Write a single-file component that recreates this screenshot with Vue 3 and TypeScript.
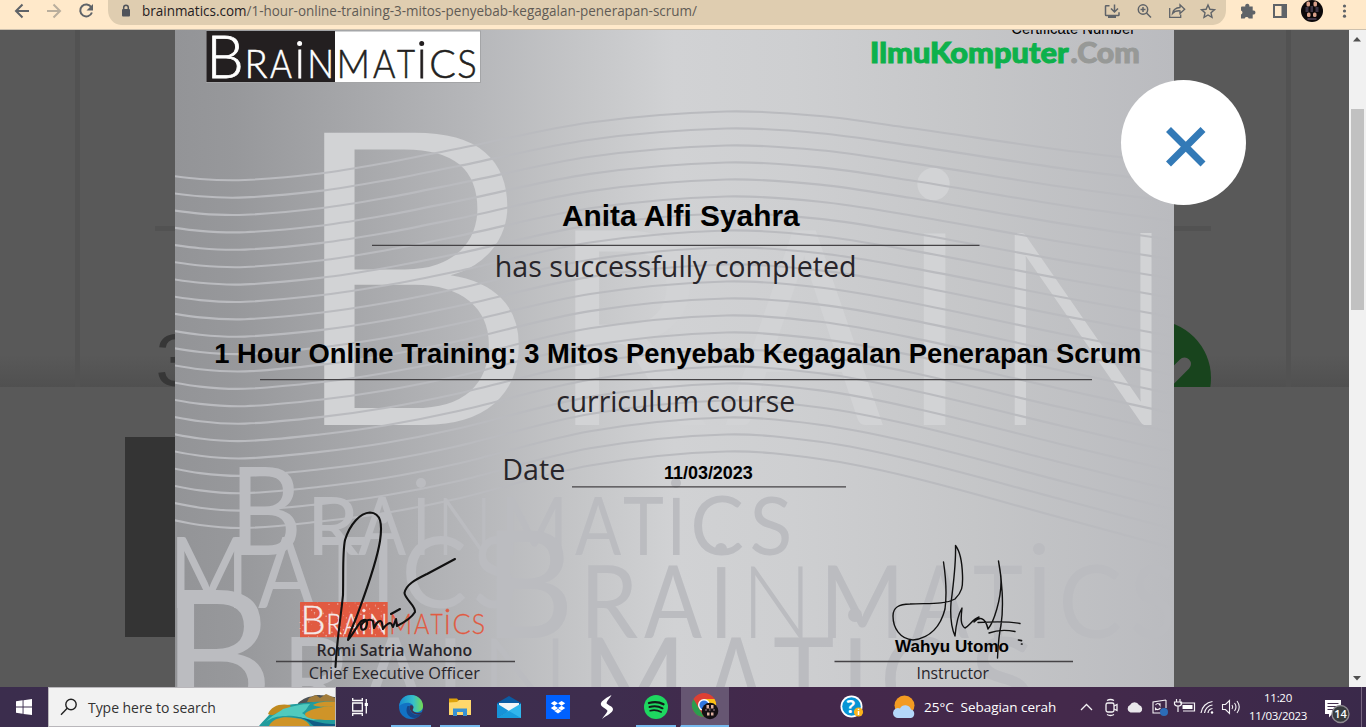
<script setup lang="ts">
interface Glyph {
  key: string
  ch: string
  family: string
  weight: number
  transform: string
}

const ctx = document.createElement('canvas').getContext('2d')!

/** Fits the ink of a text run between x0 and x1, its reference character rising from base to base - rise. */
function fit(ch: string, family: string, weight: number, x0: number, x1: number, base: number, rise: number): Glyph {
  ctx.font = `${weight} 1000px "${family}"`
  const ink = ctx.measureText(ch)
  const ref = ctx.measureText(ch === 'ı' ? 'ı' : 'H')
  const sx = ((x1 - x0) / (ink.actualBoundingBoxRight + ink.actualBoundingBoxLeft)) * 10
  const sy = (rise / ref.actualBoundingBoxAscent) * 10
  const tx = x0 + (ink.actualBoundingBoxLeft / 10) * sx
  return {
    key: `${ch}-${x0}-${base}`,
    ch,
    family,
    weight,
    transform: `matrix(${sx.toFixed(4)} 0 0 ${sy.toFixed(4)} ${tx.toFixed(2)} ${base})`,
  }
}

type Span = [string, number, number]
interface Dot { x: number; y: number; r: number }

function row(spans: Span[], base: number, rise: number, weight: number, capital?: number): Glyph[] {
  return spans.map(([ch, a, b]) => {
    const slim = ch === 'N' && weight > 300 ? 300 : weight
    return fit(ch, 'Lato', slim, a, b, base, ch === 'B' && capital ? capital : rise)
  })
}

const bigLead = row([['B', 325, 516]], 425, 195, 300, 297)
const bigRest = row([['R', 572, 707], ['A', 725, 886], ['ı', 920.7, 947], ['N', 1012, 1153]], 425, 195, 400)
const smallWords = [
  ...row([['B', 238, 298], ['R', 313, 359], ['A', 358, 407], ['ı', 417, 425], ['N', 443, 486], ['M', 506, 562], ['A', 575, 622], ['T', 623, 663], ['ı', 672, 680], ['C', 694, 743], ['S', 752, 789]], 555, 58, 400, 88),
  ...row([['M', 176, 242], ['A', 258, 316], ['T', 318, 366], ['ı', 378, 388], ['C', 406, 466], ['S', 476, 514]], 608, 71, 400),
  ...row([['B', 495, 569], ['R', 587, 638], ['A', 644, 703], ['ı', 716, 726], ['N', 750, 803], ['M', 827, 897], ['A', 912, 970], ['T', 973, 1022], ['ı', 1033, 1045], ['C', 1063, 1121], ['S', 1133, 1172]], 638, 72, 400, 108),
  ...row([['B', 175, 267], ['R', 290, 350], ['A', 358, 430], ['ı', 444, 456], ['N', 490, 559], ['M', 590, 677], ['A', 705, 768], ['T', 773, 833], ['ı', 849, 861], ['C', 885, 950], ['S', 973, 1030]], 721, 84, 400, 131),
]
const smallDots: Dot[] = [
  { x: 421, y: 483, r: 5 }, { x: 676, y: 483, r: 5 }, { x: 383, y: 518, r: 5.5 },
  { x: 721, y: 549, r: 6 }, { x: 1039, y: 549, r: 6 }, { x: 855, y: 615, r: 7 },
]

const logoBrain = row([['B', 212, 240.5], ['R', 248, 267], ['A', 270, 292], ['ı', 298.3, 301], ['N', 310.500, 330.500]], 77.5, 28, 300, 42)
const logoMatics = row([['M', 340, 366.5], ['A', 373, 395.5], ['T', 397, 415], ['ı', 420.3, 423], ['C', 431, 455], ['S', 458.5, 475]], 77.5, 28, 300)

const ilmu = fit('IlmuKomputer', 'Lato', 900, 872, 1068.5, 63, 20.5)
const dotCom = fit('.Com', 'Lato', 900, 1071.500, 1138.5, 63, 20.5)

const sans = 'Liberation Sans'
const soft = 'Open Sans'
const inkTexts = [
  fit('Certificate Number', sans, 400, 1012, 1135, 33.6, 11),
  fit('Anita Alfi Syahra', sans, 700, 562.5, 801, 226, 21),
  fit('1 Hour Online Training: 3 Mitos Penyebab Kegagalan Penerapan Scrum', sans, 700, 216, 1140, 363, 19.3),
  fit('11/03/2023', sans, 700, 665, 752.5, 478.5, 13.4),
  fit('Wahyu Utomo', sans, 700, 895, 1008.5, 652, 11.7),
]
const greyTexts = [
  fit('has successfully completed', soft, 400, 497, 854.5, 277, 20.5),
  fit('curriculum course', soft, 400, 557.5, 794, 411.7, 20.5),
  fit('Date', soft, 400, 505, 564, 480, 20.5),
  fit('Romi Satria Wahono', soft, 600, 318, 471.5, 656, 11.5),
  fit('Chief Executive Officer', soft, 400, 309.5, 480, 679.3, 11.8),
  fit('Instructor', soft, 400, 918, 989, 679.3, 11.8),
]

/* Guilloche lines: anchors of the first line, and the step to the next one. */
const anchors = [
  [150, 173, 17.1], [200, 179, 17.3], [245, 180, 17.4], [320, 173.5, 17.4], [385, 163, 17.5], [456, 149, 17.5],
  [590, 122.5, 17.15], [726, 111.5, 17], [820, 116, 17.15], [910, 128, 17.45], [1062, 150, 18.4], [1180, 164, 19.3],
]
const waves = Array.from({ length: 21 }, (_, i) => {
  const p = anchors.map(([x, y, s]) => [x, y + s * i])
  let d = `M${p[0][0]} ${p[0][1].toFixed(1)}`
  for (let k = 0; k < p.length - 1; k++) {
    const slope = (n: number) => {
      const a = p[Math.max(n - 1, 0)]
      const b = p[Math.min(n + 1, p.length - 1)]
      return (b[1] - a[1]) / (b[0] - a[0])
    }
    const h = (p[k + 1][0] - p[k][0]) / 3
    const c1 = p[k][1] + slope(k) * h
    const c2 = p[k + 1][1] - slope(k + 1) * h
    d += `C${p[k][0] + h} ${c1.toFixed(1)} ${p[k + 1][0] - h} ${c2.toFixed(1)} ${p[k + 1][0]} ${p[k + 1][1].toFixed(1)}`
  }
  return d
})

const specks = Array.from({ length: 110 }, (_, i) => ({
  x: 300 + ((i * 37.7) % 87),
  y: 602 + ((i * 13.31 + (i % 7) * 3.1) % 35),
  r: 0.3 + (i % 4) * 0.16,
}))

const host = 'brainmatics.com'
const path = '/1-hour-online-training-3-mitos-penyebab-kegagalan-penerapan-scrum/'
</script>

<template>
  <div class="screen">
    <header class="toolbar">
      <svg class="nav" viewBox="0 0 108 29">
        <g fill="none" stroke="#5f6368" stroke-width="2">
          <path d="M29 11H16.500M22.500 4.500 16 11l6.500 6.500" />
          <path d="M47 11h12.500M53.500 4.500 60 11l-6.500 6.500" stroke="#b9ae9d" />
          <path d="M91.300 7.200A6 6 0 1 0 91.900 12.500" />
        </g>
        <path d="M93 4v6.500h-6.500z" fill="#5f6368" />
      </svg>
      <div class="omnibox">
        <svg class="lock" width="12" height="14" viewBox="0 0 12 14"><path d="M3 5h6q1 0 1 1v5.500q0 1-1 1H3q-1 0-1-1V6q0-1 1-1z" fill="#50535a" /><path d="M3.700 5V3.500a2.300 2.300 0 0 1 4.600 0V5" fill="none" stroke="#50535a" stroke-width="1.500" /></svg>
        <svg class="url" width="560" height="24"><text x="0" y="16" textLength="555" lengthAdjust="spacingAndGlyphs"><tspan fill="#1f2022">{{ host }}</tspan><tspan>{{ path }}</tspan></text></svg>
        <svg class="actions" width="128" height="24" viewBox="0 0 128 24">
          <g fill="none" stroke="#5f6368" stroke-width="1.500">
            <path d="M7.500 5.700H4.200q-.7 0-.7.700v8.300q0 .800.700.800h12q.8 0 .8-.8v-2.500M12.500 4.500v7M9 8.500l3.500 3.500L16 8.500" />
            <path d="M6 17h8" stroke-width="2" />
            <circle cx="41" cy="9.500" r="4.700" /><path d="m44.500 13 4.500 4.500M38.500 9.500h5M41 7v5" />
            <path d="M67.700 8v9.300h11V14.500M70.500 13.500q1-5.500 7.500-6V4.800l4.700 4.500-4.700 4.200v-2.700q-5-.3-7.500 2.700z" stroke-width="1.300" />
            <path d="m106 5 1.900 4.300 4.600.4-3.500 3.100 1 4.600-4-2.400-4 2.400 1-4.600-3.500-3.100 4.600-.4z" stroke-width="1.400" />
          </g>
        </svg>
      </div>
      <svg class="tools" width="140" height="29" viewBox="0 0 140 29">
        <path d="M16 6.500h3.300a2.100 2.100 0 1 1 4 0h3.400v4a2.100 2.100 0 1 1 0 4v4h-4a2.100 2.100 0 0 0-4 0H15v-4a2.100 2.100 0 0 0 0-4v-3q0-1 1-1z" fill="#5f6368" />
        <path d="M48 5h12v12H48z" fill="none" stroke="#5f6368" stroke-width="2" /><path d="M55.500 4h5v14h-5z" fill="#5f6368" />
        <circle cx="86" cy="11" r="11" fill="#0c080a" />
        <g fill="#d89f88"><rect x="80.500" y="1.500" width="3.500" height="5" rx="1.500" /><rect x="87.500" y="1.500" width="3.500" height="5" rx="1.500" /><rect x="81" y="12.500" width="3.500" height="4.500" rx="1.500" /><rect x="87" y="12.500" width="3.500" height="4.500" rx="1.500" /></g>
        <path d="M79.500 7h3v5h-3zm5-1h2.500v6h-2.500zm5 1h3v5h-3zm-8 11h9v2h-9z" fill="#3e3444" />
        <g fill="#5f6368"><circle cx="118.500" cy="6" r="1.600" /><circle cx="118.500" cy="11" r="1.600" /><circle cx="118.500" cy="16.200" r="1.600" /></g>
      </svg>
    </header>

    <main class="view">
      <div class="page">
        <section class="upper">
          <div class="panel">
            <svg class="panel-art" width="1206" height="357" viewBox="80 30 1206 357">
              <path d="M155 226h1056v5H155z" fill="#525252" />
              <text x="155.500" y="386" font-size="74" fill="#373737">3</text>
              <circle cx="1153" cy="378" r="58" fill="#18441d" />
              <path d="m1184.500 364-31 31-15-15" fill="none" stroke="#595959" stroke-width="13" stroke-linecap="round" stroke-linejoin="round" />
            </svg>
          </div>
        </section>
        <section class="lower"><div class="thumb"></div></section>
      </div>

      <svg class="certificate" width="999" height="657" viewBox="175 30 999 657">
        <defs>
          <linearGradient id="metal" gradientUnits="userSpaceOnUse" x1="175" y1="0" x2="1174" y2="0">
            <stop offset="0" stop-color="#939497" /><stop offset=".06" stop-color="#97989b" /><stop offset=".17" stop-color="#a5a6a9" />
            <stop offset=".3" stop-color="#b6b7ba" /><stop offset=".4" stop-color="#c4c5c7" /><stop offset=".5" stop-color="#d1d2d4" />
            <stop offset=".62" stop-color="#cecfd1" /><stop offset=".8" stop-color="#c5c6c8" /><stop offset="1" stop-color="#babbbf" />
          </linearGradient>
          <filter id="broad" filterUnits="userSpaceOnUse" x="300" y="100" width="240" height="340"><feMorphology operator="dilate" radius="5 0" /></filter>
        </defs>
        <rect x="175" y="30" width="999" height="657" fill="url(#metal)" />
        <g fill="#d2d3d5" color-interpolation-filters="sRGB">
          <g filter="url(#broad)">
            <text v-for="g in bigLead" :key="g.key" :transform="g.transform" :font-family="g.family" :font-weight="g.weight" font-size="100">{{ g.ch }}</text>
          </g>
          <text v-for="g in bigRest" :key="g.key" :transform="g.transform" :font-family="g.family" :font-weight="g.weight" font-size="100">{{ g.ch }}</text>
          <circle cx="933.500" cy="184" r="16.200" />
        </g>
        <path v-for="(d, i) in waves" :key="i" :d="d" fill="none" stroke="#babbbf" stroke-width="2.100" />
        <g fill="#bbbcc0">
          <text v-for="g in smallWords" :key="g.key" :transform="g.transform" :font-family="g.family" :font-weight="g.weight" font-size="100">{{ g.ch }}</text>
          <circle v-for="(c, i) in smallDots" :key="i" :cx="c.x" :cy="c.y" :r="c.r" />
        </g>

        <rect x="206.500" y="31" width="274" height="51.500" fill="#fff" stroke="#a4a5a7" />
        <rect x="206.500" y="31" width="128.500" height="51" fill="#231f20" />
        <g fill="#fff" stroke="#fff" stroke-width="1.400">
          <text v-for="g in logoBrain" :key="g.key" :transform="g.transform" :font-family="g.family" :font-weight="g.weight" font-size="100">{{ g.ch }}</text>
          <circle cx="299.600" cy="43.500" r="1.800" />
        </g>
        <g fill="#231f20" stroke="#231f20" stroke-width="1.400">
          <text v-for="g in logoMatics" :key="g.key" :transform="g.transform" :font-family="g.family" :font-weight="g.weight" font-size="100">{{ g.ch }}</text>
          <circle cx="421.700" cy="43.500" r="1.800" />
        </g>
        <g font-size="100" stroke-width="3.500">
          <text :transform="ilmu.transform" :font-family="ilmu.family" :font-weight="ilmu.weight" fill="#0db14b" stroke="#0db14b">{{ ilmu.ch }}</text>
          <text :transform="dotCom.transform" :font-family="dotCom.family" :font-weight="dotCom.weight" fill="#979997" stroke="#979997">{{ dotCom.ch }}</text>
        </g>

        <g fill="none" stroke="#454346" stroke-width="1.300">
          <path d="M372 245.300h607.500M260 379.700h832M572 486.800h274M276 661.500h239M834.500 661.500H1073" />
        </g>

        <rect x="300" y="602" width="87.700" height="35.200" fill="#e15a41" />
        <circle v-for="(s, i) in specks" :key="'s' + i" :cx="s.x" :cy="s.y" :r="s.r" fill="#eab3a8" />
        <g transform="translate(159.300 580.800) scale(.683)">
          <g fill="#f4e9e8" stroke="#f4e9e8">
            <text v-for="g in logoBrain" :key="g.key" :transform="g.transform" :font-family="g.family" :font-weight="g.weight" font-size="100">{{ g.ch }}</text>
            <circle cx="299.600" cy="43.500" r="2" />
          </g>
          <g fill="#e15a41" stroke="#e15a41">
            <text v-for="g in logoMatics" :key="g.key" :transform="g.transform" :font-family="g.family" :font-weight="g.weight" font-size="100">{{ g.ch }}</text>
            <circle cx="421.700" cy="43.500" r="2.200" />
          </g>
        </g>

        <g font-size="100">
          <text v-for="g in greyTexts" :key="g.key" :transform="g.transform" :font-family="g.family" :font-weight="g.weight" fill="#28252a">{{ g.ch }}</text>
          <text v-for="g in inkTexts" :key="g.key" :transform="g.transform" :font-family="g.family" :font-weight="g.weight">{{ g.ch }}</text>
        </g>

        <g fill="none" stroke="#111" stroke-linecap="round" stroke-linejoin="round">
          <path stroke-width="2.100" d="M335.500 667C337 640 341 615 343 595C343.500 570 342.500 552 345 540C350 524 360 513 370 512.500C381 513 382.500 524 380 541C376 566 364 596 356.500 617C353 626 349 634 348 640C351 637 356 628 359 624C362 619 368 618 367 624C366 631 360 632 361 625C364 621 370 618 373 621L374 628C377 621 381 619 382 623L383 629C386 624 391 621 392 625L393 627L396 619L397 626C403 623 412 617 415 612C416 606 405 599 404.500 593C406 584 417 579 427 574L455 559M391 614l9-5" />
          <path stroke-width="1.400" d="M943.500 562C945 572 947.500 590 945 609C941 625 931 638 913 640C900 639 893 628 893 616C893 607 899 604 910 604C927 603 944 605 955 599C962 592 963 587 962.500 575C962 560 959 550 955.500 545.500C956 560 953.500 584 951 603C950 617 952 629 955 636C956 625 959 613 962 608C961 617 960 625 965 628C969 626 973 619 979 617C977 620 974 620 974 622C979 617 985 616 988 629C994 622 1001 599 1001 582C1001 573 999 565 998.500 561C1002 579 1004 606 1001 625C998 640 998 650 997.500 658M978 622.500c14-.8 31-1.200 42 1M989 633c8-3 18-3 26-1.500" />
          <path stroke-width="1.700" d="M1018.500 640l3 .600M1021.500 644h.5" />
        </g>
      </svg>

      <button class="close" aria-label="Close"><svg width="125" height="125" viewBox="0 0 125 125"><path d="m47.500 49.500 34.500 34.500M82 49.500 47.500 84" fill="none" stroke="#337ab7" stroke-width="7" /></svg></button>

      <div class="scrollbar">
        <svg width="17" height="17"><path d="M4 11.500h8L8 7z" fill="#505050" /></svg>
        <div class="track"><div class="grip"></div></div>
        <svg width="17" height="17"><path d="M4 6h8l-4 4.500z" fill="#505050" /></svg>
      </div>
    </main>

    <footer class="taskbar">
      <div class="start"><svg width="16" height="16" viewBox="0 0 16 16"><path d="M0 2.300 6.600 1.300V7.600H0zM7.500 1.200 16 0v7.600H7.500zM0 8.500h6.600v6.300L0 13.800zM7.500 8.500H16V16l-8.500-1.100z" fill="#fff" /></svg></div>
      <div class="search">
        <svg width="18" height="18" viewBox="0 0 18 18"><g fill="none" stroke="#222" stroke-width="1.400"><circle cx="11" cy="6.500" r="5.200" /><path d="m7.200 10.300-6.200 6.400" /></g></svg>
        <span>Type here to search</span>
        <svg class="scene" width="76" height="38" viewBox="0 0 76 38">
          <path d="M39 15c6-5 10-6 15-7 4-2 8-1 22 1v14H40z" fill="#4e5356" /><path d="M50 10l7-3 4 3 6-4 9 4v4H48z" fill="#a27c3a" />
          <path d="M0 38c12-13 17-21 37-22 14-2 24-3 39-2v24z" fill="#229c9d" />
          <path d="M9 26c3-8 12-11 22-9 3 3-8 7-13 8-3 2-6 3-9 1z" fill="#c08a20" />
          <path d="M24 21c10-3 18-5 27-5-3 3-3 6-8 9 6 4 10 6 16 7-12 1-20-6-32-4-9 0-15 2-20 6 6-7 12-9 17-13z" fill="#50cabe" />
          <path d="M46 26c3-5 20-8 30-8v14c-13 0-30 0-30-6zM54 17c4-3 13-4 22-3v4c-9 0-17 2-22-1z" fill="#cf9428" />
          <path d="M10 38c4-8 14-10 26-8 10 1 13 4 15 8z" fill="#cf9428" />
          <path d="M36 29c14 2 14 6 19 9h21v-2c-20 0-24-6-40-7z" fill="#105d86" />
        </svg>
      </div>
      <div class="view-switch"><svg width="18" height="18" viewBox="0 0 18 18"><g fill="none" stroke="#fff" stroke-width="1.300"><path d="M1.700 5h9.600v8H1.700zM1.700 0v2.500h9.600V0M1.700 18v-2.500h9.600V18M15.300 1v14.500" /></g><path d="M13.700 5h3.200v3h-3.200z" fill="#fff" /></svg></div>
      <div class="app running">
        <svg width="26" height="26" viewBox="0 0 26 26"><defs><linearGradient id="e1"><stop stop-color="#168bd2" /><stop offset=".6" stop-color="#37bfc9" /><stop offset="1" stop-color="#75db4e" /></linearGradient></defs><circle cx="13" cy="13" r="12" fill="#1272c4" /><path d="M1.200 12C2 4 8 1 13 1c8 0 12 6 12 11 0 4-3 6-7 6-4 0-4-2-3-4 2-5-7-8-13.800-2z" fill="url(#e1)" /><path d="M11.500 13c0-2.500 3.500-2.500 4 0 0 2-1 2-.8 3.500 2 2.500 6 3.500 9.500 1.500l-1.500 2.500c-6 1-11.200-2.500-11.200-7.500z" fill="#3d3150" /><path d="M9.500 12c-3 6 1 12 7 12 3 0 5-1.500 6.200-3.500-7 2.500-12-3.500-11.200-8.500z" fill="#15468b" /></svg>
      </div>
      <div class="app running">
        <svg width="24" height="24" viewBox="0 0 24 24"><path d="M1 3.500h8l2 2.500h12v14H1z" fill="#dfa30b" /><path d="M1 7.500 9 7l2-2h12v15H1z" fill="#ffd86c" /><path d="M5 13.500h14V21h-4v-4H9v4H5z" fill="#3991d2" /></svg>
      </div>
      <div class="app">
        <svg width="26" height="24" viewBox="0 0 26 24"><path d="M1 8 13 1l12 7v4H1z" fill="#0b5ba3" /><path d="M3 8h20v9H3z" fill="#f4f5f7" /><path d="M1 8.500 13 16 1 23z" fill="#1593d8" /><path d="M25 8.500V23H1z" fill="#31b6ec" /><path d="M13 16 25 23H1z" fill="#189cdd" /></svg>
      </div>
      <div class="app">
        <svg width="24" height="24" viewBox="0 0 24 24"><path d="M0 0h24v24H0z" fill="#0061ff" /><g fill="#fff"><path d="m8.400 6 3.600 2.300-3.600 2.400-3.600-2.400zM15.600 6l3.600 2.300-3.600 2.400L12 8.300zM8.400 10.800 12 13.100l-3.600 2.300-3.600-2.300zM15.600 10.800l3.600 2.300-3.600 2.300-3.600-2.300zM8.400 16.100 12 13.800l3.600 2.300-3.600 2.400z" /></g></svg>
      </div>
      <div class="app">
        <svg width="14" height="25" viewBox="0 0 14 25"><path d="M11.500 0C4 4 0 7 1 10c.5 2 6 4 6.500 6-1 3-4 5-5.500 8 5-4 11-6 11-10-.4-3-6-4-6.500-6 .5-3 4-5 5-8z" fill="#fff" /></svg>
      </div>
      <div class="app running">
        <svg width="24" height="24" viewBox="0 0 24 24"><circle cx="12" cy="12" r="12" fill="#1ed760" /><g fill="none" stroke="#121b18" stroke-linecap="round"><path d="M5 8q8-2.300 14.500 1.300" stroke-width="2.300" /><path d="M5.500 12q7-2 13 1.300" stroke-width="2" /><path d="M6.200 15.700q5.500-1.500 11 1.200" stroke-width="1.700" /></g></svg>
      </div>
      <div class="app active">
        <svg width="28" height="28" viewBox="0 0 28 28"><circle cx="13" cy="13" r="12" fill="#dd4033" /><path d="M2.500 7 13 25a12 12 0 0 1-10.500-18z" fill="#2b9d4e" /><path d="M13 7h10.500A12 12 0 0 1 13 25l5-9z" fill="#fbc116" /><circle cx="13" cy="13" r="6" fill="#fff" /><circle cx="13" cy="13" r="4.600" fill="#3177df" /><circle cx="19" cy="19" r="8.300" fill="#141014" /><path d="M15.500 13h2.500v3.500h-2.500zm4.500 0h2.500v3.500H20zm-4 7.500h2.500v3H16zm4 0h2.500v3H20z" fill="#deb0a0" /><path d="M14 17h2v2h-2zm4-1h1.500v3H18zm4 1h2v2h-2z" fill="#5b4a52" /></svg>
      </div>

      <div class="tray">
        <svg width="24" height="24" viewBox="0 0 24 24" class="help"><circle cx="11.500" cy="11.500" r="11" fill="#fff" /><circle cx="11.500" cy="11.500" r="9.300" fill="#0795d5" /><text x="6.500" y="18" font-size="18" font-weight="700" fill="#fff">?</text><circle cx="18.500" cy="17" r="4.600" fill="#fbb31a" /><path d="M18.500 13.700v1.300M18.500 16v4" stroke="#fff" stroke-width="1.500" /></svg>
        <svg width="24" height="24" viewBox="0 0 24 24" class="weather"><circle cx="11.500" cy="10.500" r="10" fill="#f39b22" /><path d="M6 23a5 5 0 1 1 1-9.500 6 6 0 0 1 11 1 4.400 4.400 0 0 1 0 8.500z" fill="#b4d7f9" /></svg>
        <span class="forecast">25°C&nbsp; Sebagian cerah</span>
        <svg class="tray-icons" width="170" height="24" viewBox="0 0 170 24">
          <g fill="none" stroke="#f4f2f5" stroke-width="1.300">
            <path d="m7 15 5.500-5.500L18 15" />
            <rect x="32" y="8" width="8" height="9" rx="1.800" /><path d="m40 11 3-1.500v6L40 14M33 5.500q3.500-2 7 0M33 19.500q3.500 2 7 0" />
            <path d="m92 5-13 2v11h9M92 5v8M81.500 10q2.500-3 4.500.300v-2M86.500 13q-3 3-5 .300v2" stroke-width="1.100" />
            <path d="M106 8h14.500v8H109M102.500 4v3M106 4v3M100.500 7h7v2q-.500 2-3.500 2t-3.500-2zM104 11v6" stroke-width="1.200" />
            <path d="M127 18A13 13 0 0 1 138.500 6.500M130.500 18a9 9 0 0 1 8-8M134 18a5 5 0 0 1 4.500-4.500" stroke-width="1.200" />
            <path d="M148.500 9.500h3l4-4v13l-4-4h-3zM158 10q1.500 2 0 4M160.500 8q3 4 0 8M163 6q4.500 6 0 12" stroke-width="1.100" />
          </g>
          <path d="M56.500 17.500a4 4 0 0 1-.500-7.500 5 5 0 0 1 9 0 4 4 0 0 1 1 7.500z" fill="#e9e7eb" /><path d="M108.500 10h10v4h-10z" fill="#fff" /><circle cx="90" cy="17" r="4" fill="#2c6cb8" /><circle cx="138" cy="17.500" r="1.200" fill="#fff" />
        </svg>
        <div class="clock"><span>11:20</span><span>11/03/2023</span></div>
        <svg class="notice" width="50" height="40" viewBox="0 0 50 40"><path d="M14 13h16v14h-9l-3 3.500V27h-4z" fill="#fff" /><path d="M16.500 16.500h11M16.500 19.500h11M16.500 22.500h11" stroke="#45304f" stroke-width="1" /><circle cx="29.500" cy="27" r="8.500" fill="#383c3e" stroke="#8e8b91" stroke-width="1.300" /><text x="23.200" y="31.200" font-size="11" font-weight="600" fill="#fff">14</text></svg>
        <div class="peek"></div>
      </div>
    </footer>
  </div>
</template>

<style>
html, body { margin: 0; overflow: hidden; }
</style>

<style scoped>
.screen { width: 1366px; height: 727px; display: flex; flex-direction: column; overflow: hidden; font-family: "Open Sans", "Noto Sans", sans-serif; }
svg { display: block; flex: none; }
.toolbar { height: 29px; flex: none; display: flex; background: #ffe9ca; border-bottom: 1px solid #cdc1af; }
.nav { width: 108px; height: 29px; }
.omnibox { width: 1118px; height: 25px; display: flex; align-items: flex-start; background: #dfcdb0; border-radius: 0 0 13px 13px / 0 0 15px 15px; box-sizing: border-box; padding: 0 8px 0 12px; }
.lock { margin-top: 4px; }
.url { margin-left: 10px; font-size: 14px; overflow: visible; }
.url text { fill: #5f5b55; }
.actions { margin-left: auto; margin-right: -12px; }
.view { position: relative; height: 657px; flex: none; display: flex; background: #595959; }
.page { position: absolute; inset: 0 17px 0 0; }
.upper { height: 357px; padding: 0 58px 0 75px; background: linear-gradient(to bottom, #595959 325px, #505050 357px); }
.panel { height: 357px; border: solid #525252; border-width: 0 5px; }
.panel-art { font-family: "Liberation Sans", sans-serif; }
.lower { height: 300px; background: #595959; padding: 50px 0 0 125px; box-sizing: border-box; }
.thumb { width: 60px; height: 200px; background: #343434; }
.certificate { position: relative; margin-left: 175px; }
.close { position: absolute; left: 1121px; top: 50px; width: 125px; height: 125px; padding: 0; border: 0; border-radius: 50%; background: #fff; }
.scrollbar { position: relative; margin-left: auto; width: 17px; background: #f1f1f1; display: flex; flex-direction: column; }
.track { flex: 1; padding: 62px 2px 0; }
.grip { height: 201px; background: #c1c1c1; }
.taskbar { height: 40px; flex: none; display: flex; color: #fff; background: linear-gradient(90deg, #3b2d4d 0, #3e2d4e 45%, #44284b 58%, #44294b 78%, #3a294a 100%); }
.start { width: 48px; display: grid; place-items: center; }
.search { width: 288px; box-sizing: border-box; display: flex; align-items: center; background: #f2f2f2; border: 1px solid #b9b7bb; padding-left: 11px; color: #333; font-size: 14px; }
.search span { margin-left: 10px; letter-spacing: -.05px; }
.scene { margin-left: auto; align-self: flex-end; }
.view-switch { width: 50px; box-sizing: border-box; padding-right: 2px; display: grid; place-items: center; }
.app { width: 49px; display: grid; place-items: center; box-sizing: border-box; }
.running { background: linear-gradient(#76b9ed, #76b9ed) 5px 100% / 40px 2px no-repeat; }
.active { width: 49px; border-left: 1px solid transparent; background: #665672 padding-box; border-bottom: 2px solid #76b9ed; }
.tray { margin-left: auto; display: flex; align-items: center; }
.help { margin-right: 29px; }
.weather { margin-right: 7px; }
.forecast { width: 133px; font-size: 13.500px; white-space: nowrap; letter-spacing: -.03px; }
.tray-icons { margin-left: 17px; }
.clock { width: 66px; margin-left: 1px; display: flex; flex-direction: column; align-items: center; font-size: 11.500px; line-height: 18px; letter-spacing: -.3px; }
.peek { width: 5px; height: 40px; border-left: 1px solid #776680; box-sizing: border-box; }
</style>
